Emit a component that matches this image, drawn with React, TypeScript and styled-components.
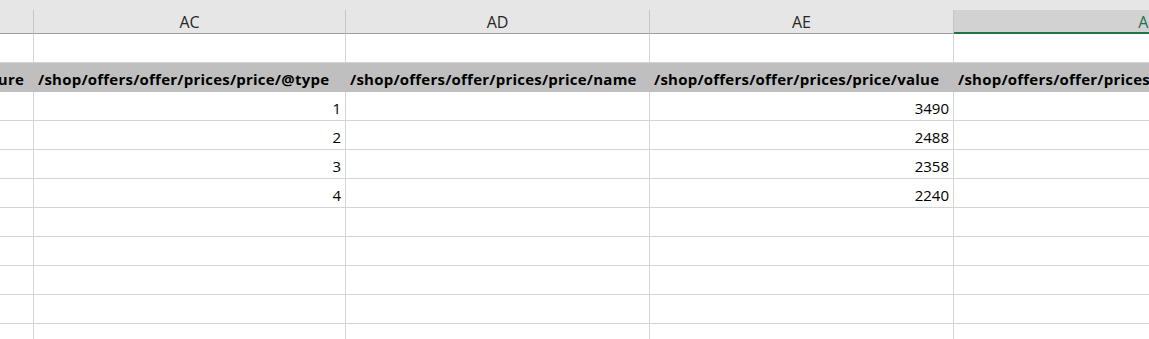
import styled, { createGlobalStyle } from "styled-components";

const GlobalStyle = createGlobalStyle`
    html, body {
        margin: 0;
        padding: 0;
        background: #ffffff;
        overflow: hidden;
    }
    * {
        box-sizing: border-box;
    }
`;

const COLS = "34px 312px 304px 304px 388px";

const Sheet = styled.div`
    width: 1149px;
    height: 339px;
    overflow: hidden;
    background: #ffffff;
    font-family: "Open Sans", "Liberation Sans", sans-serif;
`;

const TopStrip = styled.div`
    height: 10px;
    background: #e6e6e6;
`;

const HeaderRow = styled.div`
    display: grid;
    grid-template-columns: ${COLS};
    height: 24px;
    background: #e6e6e6;
`;

const ColHead = styled.div<{ $selected?: boolean }>`
    display: flex;
    align-items: center;
    justify-content: center;
    border-right: 1px solid ${(p) => (p.$selected ? "#d2d2d2" : "#c6c6c6")};
    border-bottom: ${(p) => (p.$selected ? "2px solid #217346" : "1px solid #9e9e9e")};
    background: ${(p) => (p.$selected ? "#d2d2d2" : "#e6e6e6")};
    color: ${(p) => (p.$selected ? "#217346" : "#262626")};
    font-size: 16px;
    padding-top: 1px;
    overflow: hidden;
    white-space: nowrap;
`;

const Row = styled.div<{ $fill?: boolean }>`
    display: grid;
    grid-template-columns: ${COLS};
    height: 29px;
    background: ${(p) => (p.$fill ? "#bfbfbf" : "#ffffff")};
`;

const Cell = styled.div<{ $fill?: boolean; $align?: "left" | "right" }>`
    display: flex;
    align-items: flex-end;
    justify-content: ${(p) => (p.$align === "right" ? "flex-end" : "flex-start")};
    padding: 0 ${(p) => (p.$align === "right" ? "4px" : "0")} 2px ${(p) => (p.$align === "right" ? "0" : "4px")};
    border-right: 1px solid ${(p) => (p.$fill ? "#bfbfbf" : "#d4d4d4")};
    border-bottom: 1px solid ${(p) => (p.$fill ? "#bfbfbf" : "#d4d4d4")};
    font-size: 15px;
    font-weight: ${(p) => (p.$fill ? 700 : 400)};
    letter-spacing: ${(p) => (p.$fill ? "0.22px" : "0")};
    color: #000000;
    white-space: nowrap;
    overflow: ${(p) => (p.$fill ? "visible" : "hidden")};
    line-height: 20px;
`;

const ClipCell = styled(Cell)`
    overflow: hidden;
    justify-content: flex-end;
    padding: 0 9px 2px 0;
`;

const heads = ["", "AC", "AD", "AE", "AF"];
const paths = [
    "/shop/offers/offer/prices/price/@type",
    "/shop/offers/offer/prices/price/name",
    "/shop/offers/offer/prices/price/value",
    "/shop/offers/offer/prices/price/@currency",
];
const data = [
    [1, 3490],
    [2, 2488],
    [3, 2358],
    [4, 2240],
];

function App() {
    return (
        <Sheet>
            <GlobalStyle />
            <TopStrip />
            <HeaderRow>
                {heads.map((h, i) => (
                    <ColHead key={i} $selected={i === 4}>
                        {h}
                    </ColHead>
                ))}
            </HeaderRow>
            <Row>
                {heads.map((_, i) => (
                    <Cell key={i} />
                ))}
            </Row>
            <Row $fill>
                <ClipCell $fill>picture</ClipCell>
                {paths.map((p) => (
                    <Cell key={p} $fill>
                        {p}
                    </Cell>
                ))}
            </Row>
            {data.map(([type, value]) => (
                <Row key={type}>
                    <Cell />
                    <Cell $align="right">{type}</Cell>
                    <Cell />
                    <Cell $align="right">{value}</Cell>
                    <Cell />
                </Row>
            ))}
            {[0, 1, 2, 3, 4].map((i) => (
                <Row key={"e" + i}>
                    {heads.map((_, j) => (
                        <Cell key={j} />
                    ))}
                </Row>
            ))}
        </Sheet>
    );
}

export default App;
